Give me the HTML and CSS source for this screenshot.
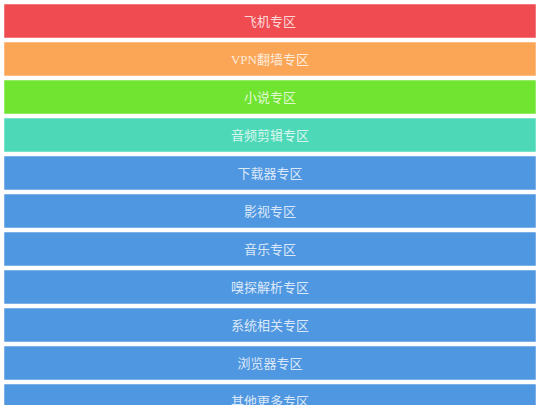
FILE: index.html
```html
<!DOCTYPE html>
<html>
<head>
<meta charset="utf-8">
<link rel="stylesheet" href="styles.css">
</head>
<body>
<nav class="list">
  <a class="item red">飞机专区</a>
  <a class="item orange">VPN翻墙专区</a>
  <a class="item green">小说专区</a>
  <a class="item teal">音频剪辑专区</a>
  <a class="item blue">下载器专区</a>
  <a class="item blue">影视专区</a>
  <a class="item blue">音乐专区</a>
  <a class="item blue">嗅探解析专区</a>
  <a class="item blue">系统相关专区</a>
  <a class="item blue">浏览器专区</a>
  <a class="item blue">其他更多专区</a>
</nav>
</body>
</html>
```
FILE: styles.css
```css
html, body { margin: 0; padding: 0; background: #ffffff; }
body { font-family: "Liberation Serif", "Noto Sans CJK SC", serif; }
.list {
  display: flex;
  flex-direction: column;
  gap: 4px;
  padding: 4px 4px 4px 4px;
}
.item {
  display: flex;
  align-items: center;
  justify-content: center;
  height: 34px;
  padding-bottom: 2px;
  box-sizing: border-box;
  font-size: 13px;
  color: rgba(255,255,255,0.8);
  border: 1px solid rgba(255,255,255,0.25);
  border-radius: 1px;
}
.red { background: #ef4b50; }
.orange { background: #fba657; }
.green { background: #71e431; }
.teal { background: #4dd9b8; }
.blue { background: #5097e1; }
```
